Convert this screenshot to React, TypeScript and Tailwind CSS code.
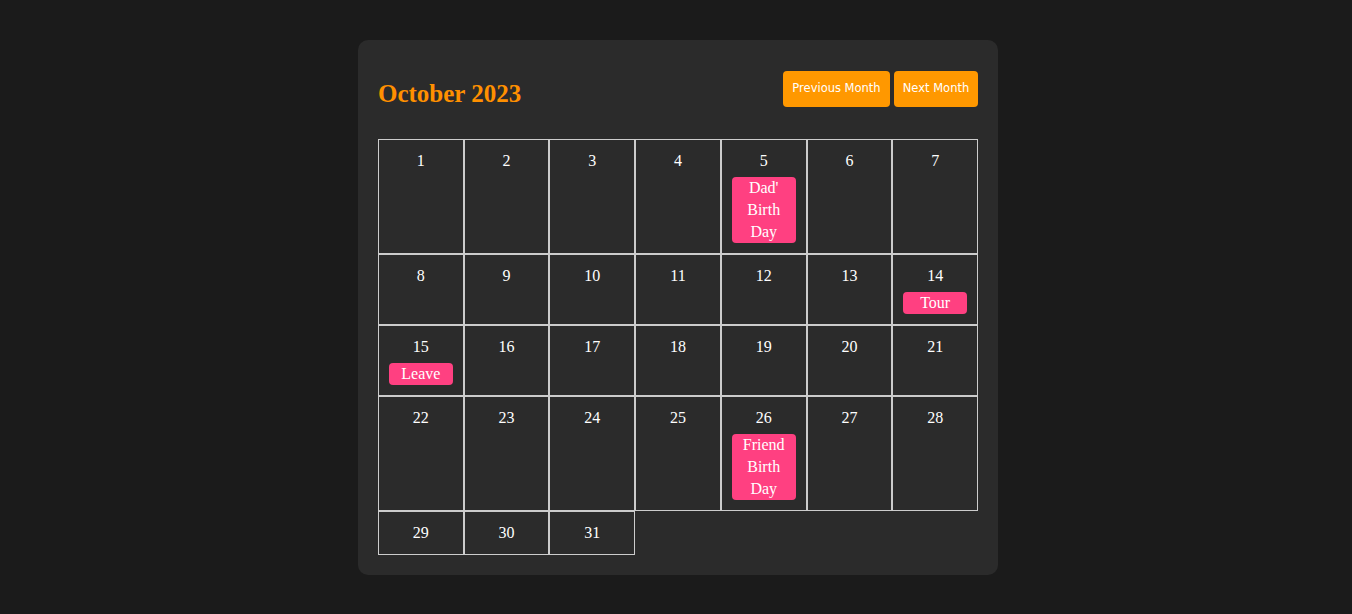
import React from 'react';

const events: Record<number, string> = {
  5: "Dad' Birth Day",
  14: 'Tour',
  15: 'Leave',
  26: 'Friend Birth Day',
};

const App = () => {
  const days = Array.from({ length: 31 }, (_, i) => i + 1);

  return (
    <div className="min-h-screen bg-[#1b1b1b] flex justify-center pt-10 pb-[39px] pl-1">
      <div className="w-[640px] bg-[#2b2b2b] rounded-[10px] p-5">
        {/* Header */}
        <div className="h-[79px] flex items-start justify-between">
          <h2 className="mt-[20px] text-[25px] leading-[28px] font-bold text-[#ff9000] font-['Liberation_Serif',serif]">
            October 2023
          </h2>
          <div className="mt-[11px] flex gap-1 font-['DejaVu_Sans',sans-serif]">
            <button className="h-9 w-[107px] rounded bg-[#ff9800] text-white text-[11.5px]">
              Previous Month
            </button>
            <button className="h-9 w-[84px] rounded bg-[#ff9800] text-white text-[11.5px]">
              Next Month
            </button>
          </div>
        </div>

        {/* Days */}
        <div className="grid grid-cols-7 font-['Liberation_Serif',serif] text-white text-[16px]">
          {days.map((d) => (
            <div key={d} className="border border-[#cccccc] p-[10px] text-center">
              <div className="leading-[22px]">{d}</div>
              {events[d] && (
                <div className="mt-[5px] bg-[#ff4081] rounded px-[5px] leading-[22px]">
                  {events[d]}
                </div>
              )}
            </div>
          ))}
        </div>
      </div>
    </div>
  );
};

export default App;
